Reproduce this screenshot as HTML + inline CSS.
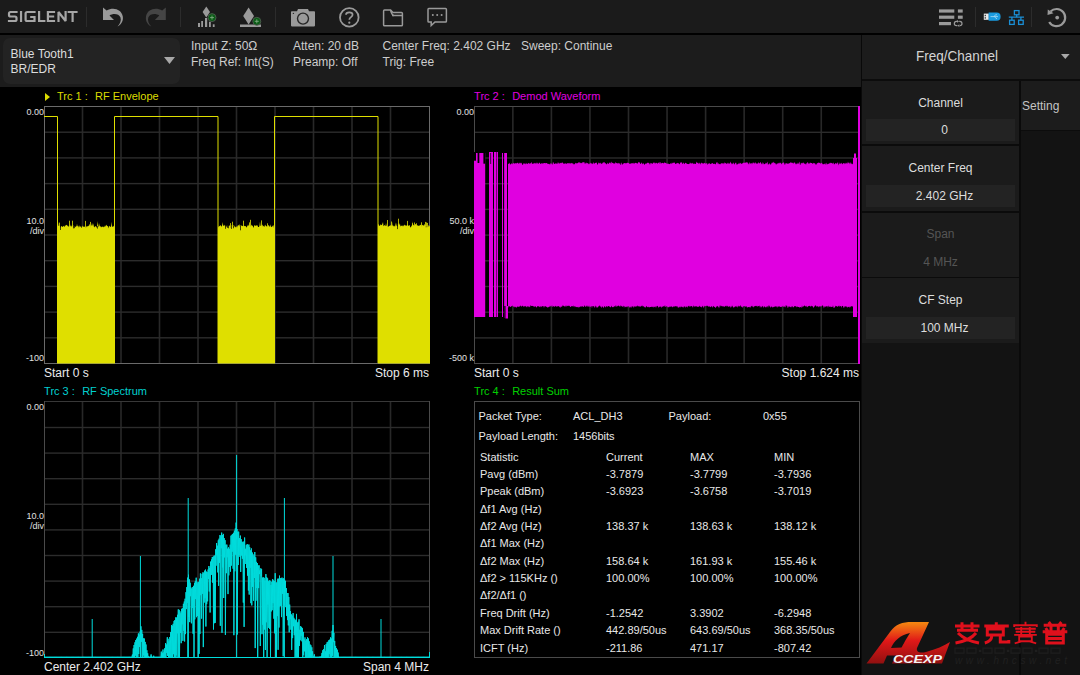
<!DOCTYPE html><html><head><meta charset="utf-8"><style>
*{margin:0;padding:0;box-sizing:border-box}
html,body{width:1080px;height:675px;overflow:hidden;background:#000;font-family:"Liberation Sans",sans-serif}
.a{position:absolute;white-space:nowrap}
.t12{font-size:12px;color:#d6d6d6}
.t11{font-size:11px}
.ax{font-size:9px;color:#e0e0e0;text-align:right;width:40px}
.w{color:#ececec;font-size:12px}
.tb{font-size:11px;color:#e8e8e8}
</style></head><body>
<div class="a" style="left:0;top:0;width:1080px;height:33px;background:#1b1b1b"></div>
<div class="a" style="left:0;top:33px;width:1080px;height:2px;background:#000"></div>
<div class="a" style="left:0;top:35px;width:861px;height:52px;background:#1c1c1c"></div>
<div class="a" style="left:3px;top:38px;width:177px;height:45.7px;background:#232323;border-radius:7px"></div>
<div class="a" style="left:861px;top:35px;width:219px;height:640px;background:#131313"></div>
<div class="a" style="left:862px;top:35px;width:218px;height:44px;background:#1c1c1c"></div>
<div class="a" style="left:861px;top:35px;width:1px;height:640px;background:#090909"></div>
<div class="a" style="left:862px;top:79px;width:218px;height:2px;background:#0c0c0c"></div>
<div class="a" style="left:1019px;top:81px;width:2px;height:594px;background:#0a0a0a"></div>
<div class="a" style="left:1021px;top:81px;width:59px;height:49px;background:#1c1c1c"></div>
<div class="a" style="left:1021px;top:130px;width:59px;height:1px;background:#0c0c0c"></div>
<div class="a" style="left:862px;top:81px;width:157px;height:262px;background:#0b0b0b"></div>
<div class="a" style="left:862px;top:81px;width:157px;height:63px;background:#1b1b1b"></div>
<div class="a" style="left:866px;top:119px;width:149px;height:22px;background:#232323"></div>
<div class="a t12" style="left:862px;width:157px;text-align:center;top:95.7px;line-height:14px;color:#dddddd">Channel</div>
<div class="a t12" style="left:866px;width:157px;text-align:center;top:123px;line-height:14px;color:#dddddd">0</div>
<div class="a" style="left:862px;top:146px;width:157px;height:65px;background:#1b1b1b"></div>
<div class="a" style="left:866px;top:185px;width:149px;height:22px;background:#232323"></div>
<div class="a t12" style="left:862px;width:157px;text-align:center;top:160.7px;line-height:14px;color:#dddddd">Center Freq</div>
<div class="a t12" style="left:866px;width:157px;text-align:center;top:188.6px;line-height:14px;color:#dddddd">2.402 GHz</div>
<div class="a" style="left:862px;top:213px;width:157px;height:64px;background:#1b1b1b"></div>
<div class="a t12" style="left:862px;width:157px;text-align:center;top:226.8px;line-height:14px;color:#555555">Span</div>
<div class="a t12" style="left:862px;width:157px;text-align:center;top:255px;line-height:14px;color:#555555">4 MHz</div>
<div class="a" style="left:862px;top:278px;width:157px;height:65px;background:#1b1b1b"></div>
<div class="a" style="left:866px;top:317px;width:149px;height:22px;background:#232323"></div>
<div class="a t12" style="left:862px;width:157px;text-align:center;top:292.7px;line-height:14px;color:#dddddd">CF Step</div>
<div class="a t12" style="left:866px;width:157px;text-align:center;top:321px;line-height:14px;color:#dddddd">100 MHz</div>
<div class="a" style="left:862px;top:48.3px;width:190px;text-align:center;font-size:14.6px;line-height:16px;color:#d4d4d4;transform:scaleX(0.925)">Freq/Channel</div>
<div class="a t12" style="left:1022px;top:99px;line-height:14px;color:#c4c4c4">Setting</div>
<div class="a t12" style="left:10.5px;top:47px;line-height:14.5px;color:#dcdcdc">Blue Tooth1<br>BR/EDR</div>
<div class="a t12" style="left:191px;top:37.8px;line-height:16px;color:#cdcdcd">Input Z: 50Ω<br>Freq Ref: Int(S)</div>
<div class="a t12" style="left:293px;top:37.8px;line-height:16px;color:#cdcdcd">Atten: 20 dB<br>Preamp: Off</div>
<div class="a t12" style="left:382.5px;top:37.8px;line-height:16px;color:#cdcdcd">Center Freq: 2.402 GHz<br>Trig: Free</div>
<div class="a t12" style="left:521px;top:37.8px;line-height:16px;color:#cdcdcd">Sweep: Continue<br></div>
<svg class="a" style="left:0;top:0" width="1080" height="675">
<path d="M164,57 L175,57 L169.5,64 Z" fill="#a8a8a8"/>
<path d="M1061,54 L1069.6,54 L1065.3,59 Z" fill="#a8a8a8"/>
<path d="M17.6,12 H10.6 Q9,12 9,13.6 V15 Q9,16.5 10.6,16.5 H14.9 Q16.5,16.5 16.5,18.1 V19.4 Q16.5,21 14.9,21 H7.9 M21.05,10.9 V22 M35.6,12 H27.2 Q25.6,12 25.6,13.6 V19.4 Q25.6,21 27.2,21 H34.5 V17 H30.2 M39.1,10.9 V21 H45.4 M55.1,12 H47.9 V21 H55.1 M47.9,16.5 H54.2 M58.5,22 V12 L65.6,21 V10.9 M67.6,12 H77.6 M72.6,12 V22" fill="none" stroke="#a6a6a6" stroke-width="2.2" stroke-miterlimit="2"/>

<rect x="86" y="7" width="1" height="20" fill="#2c2c2c"/>
<rect x="180" y="7" width="1" height="20" fill="#2c2c2c"/>
<rect x="275" y="7" width="1" height="20" fill="#2c2c2c"/>
<rect x="975" y="7" width="1" height="20" fill="#2c2c2c"/>
<rect x="1031" y="7" width="1" height="20" fill="#2c2c2c"/>
<path d="M103,7.5 L103,20 L114,20 L109.5,15.5 C113,13 119,13.5 120.5,17.5 C121.5,20.5 120,24 117.5,26.5 C121.5,24.5 123.5,20.5 122.8,16.5 C121.5,9 113,6.6 106.6,10.6 Z" fill="#9a9a9a"/>
<g transform="translate(268.8,0) scale(-1,1)"><path d="M103,7.5 L103,20 L114,20 L109.5,15.5 C113,13 119,13.5 120.5,17.5 C121.5,20.5 120,24 117.5,26.5 C121.5,24.5 123.5,20.5 122.8,16.5 C121.5,9 113,6.6 106.6,10.6 Z" fill="#454545"/></g>
<path d="M206.3,6.5 L210,12 L206.3,17.5 L202.6,12 Z" fill="#9a9a9a"/>
<rect x="198" y="23" width="2" height="4" fill="#9a9a9a"/>
<rect x="201.2" y="21" width="1.8" height="6" fill="#9a9a9a"/>
<rect x="205" y="18" width="2.2" height="9" fill="#9a9a9a"/>
<rect x="209" y="21.8" width="1.8" height="5.2" fill="#9a9a9a"/>
<rect x="212.8" y="24.3" width="1.8" height="2.7" fill="#9a9a9a"/>
<circle cx="212" cy="17.6" r="4" fill="#0a5c16" stroke="#4f5a4f" stroke-width="0.9"/>
<path d="M210,17.6 L214,17.6 M212,15.6 L212,19.6" stroke="#8ab08a" stroke-width="0.8"/>
<path d="M248.6,7.4 L254,16 L248.6,24.5 L243.2,16 Z" fill="#9a9a9a"/>
<rect x="240" y="24.5" width="21" height="2.5" fill="#9a9a9a"/>
<circle cx="256.8" cy="21.3" r="4" fill="#0a5c16" stroke="#4f5a4f" stroke-width="0.9"/>
<path d="M254.8,21.3 L258.8,21.3 M256.8,19.3 L256.8,23.3" stroke="#8ab08a" stroke-width="0.8"/>
<path d="M297,11.2 L298,9.1 L308,9.1 L309,11.2 L314.2,11.2 Q315,11.2 315,12 L315,25.6 Q315,26.4 314.2,26.4 L291.8,26.4 Q291,26.4 291,25.6 L291,12 Q291,11.2 291.8,11.2 Z" fill="#9a9a9a"/>
<circle cx="303" cy="18.6" r="5.5" fill="none" stroke="#262626" stroke-width="1.4"/>
<circle cx="293.4" cy="13.4" r="0.7" fill="#2a2a2a"/>
<circle cx="349.3" cy="17.4" r="9.3" fill="none" stroke="#9a9a9a" stroke-width="1.8"/>
<path d="M346,14.8 C346,11.5 352.6,11.5 352.6,14.8 C352.6,17.2 349.3,17.2 349.3,19.8" fill="none" stroke="#9a9a9a" stroke-width="1.7"/>
<circle cx="349.3" cy="22.7" r="1.1" fill="#9a9a9a"/>
<path d="M384.5,10 L390.5,10 L393,12.5 L401.5,12.5 Q402.4,12.5 402.4,13.4 L402.4,25 Q402.4,25.8 401.5,25.8 L384.5,25.8 Q383.6,25.8 383.6,25 L383.6,10.9 Q383.6,10 384.5,10 Z M392,15.5 L402.4,15.5" fill="none" stroke="#9a9a9a" stroke-width="1.5"/>
<path d="M390.5,10 Q392,15.5 394,15.5" fill="none" stroke="#9a9a9a" stroke-width="1.5"/>
<path d="M428.8,8.6 L445.6,8.6 Q446.4,8.6 446.4,9.4 L446.4,21.2 Q446.4,22 445.6,22 L435,22 L431.2,25.6 L431.2,22 L428.8,22 Q428,22 428,21.2 L428,9.4 Q428,8.6 428.8,8.6 Z" fill="none" stroke="#9a9a9a" stroke-width="1.5"/>
<circle cx="432.8" cy="14.9" r="1" fill="#9a9a9a"/>
<circle cx="437.2" cy="14.9" r="1" fill="#9a9a9a"/>
<circle cx="441.6" cy="14.9" r="1" fill="#9a9a9a"/>
<rect x="939" y="9.4" width="15.3" height="3.2" fill="#9a9a9a"/>
<rect x="939" y="15.6" width="15.3" height="3.2" fill="#9a9a9a"/>
<rect x="939" y="22" width="12" height="3.2" fill="#9a9a9a"/>
<rect x="957.9" y="9.4" width="4.8" height="3.2" fill="#9a9a9a"/>
<rect x="957.9" y="15.6" width="4.8" height="3.2" fill="#9a9a9a"/>
<path d="M957.6,21.4 L956.4,21.4 Q954.3,21.6 954.3,23.6 Q954.3,25.7 956.6,25.7 L957.4,25.7 M959.2,21.4 L959.8,21.4 Q962,21.6 962,23.6 Q962,25.7 959.8,25.7" fill="none" stroke="#9a9a9a" stroke-width="1.2"/>
<path d="M957,20 L959,21.4 L957,22.8 Z M959.4,24.3 L957.4,25.7 L959.4,27.1 Z" fill="#9a9a9a"/>
<rect x="983.8" y="13.6" width="5" height="6.2" fill="#e8e8e8"/>
<rect x="984.6" y="14.8" width="1.4" height="1.4" fill="#444"/><rect x="984.6" y="17.2" width="1.4" height="1.4" fill="#444"/>
<path d="M988.6,12.6 L996.6,12.6 Q1000.6,12.6 1000.6,16.65 Q1000.6,20.7 996.6,20.7 L988.6,20.7 Z" fill="#1a9be0"/>
<path d="M990.5,16.6 L998,16.6 M994,16.6 L995.5,14.8 L997,14.8 M994.6,16.6 L996,18.4 L997,18.4" stroke="#bfe4f8" stroke-width="0.7" fill="none"/>
<rect x="1014.4" y="10.6" width="4.6" height="4.2" fill="none" stroke="#1a8fd6" stroke-width="1.3"/>
<rect x="1009.6" y="20.2" width="4.6" height="4.2" fill="none" stroke="#1a8fd6" stroke-width="1.3"/>
<rect x="1018.6" y="20.2" width="4.6" height="4.2" fill="none" stroke="#1a8fd6" stroke-width="1.3"/>
<path d="M1016.7,14.8 L1016.7,17 M1008.8,17.2 L1024,17.2 M1011.9,17 L1011.9,20.2 M1020.9,17 L1020.9,20.2" stroke="#1a8fd6" stroke-width="1.3" fill="none"/>
<path d="M1050.5,11.5 A8.6,8.6 0 1 1 1049.2,22" fill="none" stroke="#9a9a9a" stroke-width="2.2"/>
<path d="M1047.5,15 L1047.8,9.5 L1053.5,13.2 Z" fill="#9a9a9a"/>
<circle cx="1057.2" cy="17.6" r="1.9" fill="#9a9a9a"/>
<rect x="81.70" y="106" width="1.6" height="257" fill="#282828"/>
<rect x="120.20" y="106" width="1.6" height="257" fill="#282828"/>
<rect x="158.70" y="106" width="1.6" height="257" fill="#282828"/>
<rect x="197.20" y="106" width="1.6" height="257" fill="#282828"/>
<rect x="235.70" y="106" width="1.6" height="257" fill="#282828"/>
<rect x="274.20" y="106" width="1.6" height="257" fill="#282828"/>
<rect x="312.70" y="106" width="1.6" height="257" fill="#282828"/>
<rect x="351.20" y="106" width="1.6" height="257" fill="#282828"/>
<rect x="389.70" y="106" width="1.6" height="257" fill="#282828"/>
<rect x="44" y="131.50" width="385" height="1.4" fill="#2c2c2c"/>
<rect x="44" y="157.20" width="385" height="1.4" fill="#2c2c2c"/>
<rect x="44" y="182.90" width="385" height="1.4" fill="#2c2c2c"/>
<rect x="44" y="208.60" width="385" height="1.4" fill="#2c2c2c"/>
<rect x="44" y="234.30" width="385" height="1.4" fill="#2c2c2c"/>
<rect x="44" y="260.00" width="385" height="1.4" fill="#2c2c2c"/>
<rect x="44" y="285.70" width="385" height="1.4" fill="#2c2c2c"/>
<rect x="44" y="311.40" width="385" height="1.4" fill="#2c2c2c"/>
<rect x="44" y="337.10" width="385" height="1.4" fill="#2c2c2c"/>
<g shape-rendering="crispEdges">
<rect x="44" y="106" width="386" height="1" fill="#6a6a6a"/>
<rect x="44" y="363" width="386" height="1" fill="#6a6a6a"/>
<rect x="44" y="106" width="1" height="258" fill="#6a6a6a"/>
<rect x="429" y="106" width="1" height="258" fill="#6a6a6a"/>
</g>
<rect x="512.05" y="106" width="1.6" height="257" fill="#282828"/>
<rect x="550.60" y="106" width="1.6" height="257" fill="#282828"/>
<rect x="589.15" y="106" width="1.6" height="257" fill="#282828"/>
<rect x="627.70" y="106" width="1.6" height="257" fill="#282828"/>
<rect x="666.25" y="106" width="1.6" height="257" fill="#282828"/>
<rect x="704.80" y="106" width="1.6" height="257" fill="#282828"/>
<rect x="743.35" y="106" width="1.6" height="257" fill="#282828"/>
<rect x="781.90" y="106" width="1.6" height="257" fill="#282828"/>
<rect x="820.45" y="106" width="1.6" height="257" fill="#282828"/>
<rect x="474" y="131.60" width="385" height="1.4" fill="#2c2c2c"/>
<rect x="474" y="157.30" width="385" height="1.4" fill="#2c2c2c"/>
<rect x="474" y="183.00" width="385" height="1.4" fill="#2c2c2c"/>
<rect x="474" y="208.70" width="385" height="1.4" fill="#2c2c2c"/>
<rect x="474" y="234.40" width="385" height="1.4" fill="#2c2c2c"/>
<rect x="474" y="260.10" width="385" height="1.4" fill="#2c2c2c"/>
<rect x="474" y="285.80" width="385" height="1.4" fill="#2c2c2c"/>
<rect x="474" y="311.50" width="385" height="1.4" fill="#2c2c2c"/>
<rect x="474" y="337.20" width="385" height="1.4" fill="#2c2c2c"/>
<g shape-rendering="crispEdges">
<rect x="474" y="106" width="386" height="1" fill="#4a4a4a"/>
<rect x="474" y="363" width="386" height="1" fill="#4a4a4a"/>
<rect x="474" y="106" width="1" height="258" fill="#4a4a4a"/>
<rect x="859" y="106" width="1" height="258" fill="#4a4a4a"/>
</g>
<rect x="81.70" y="401" width="1.6" height="256" fill="#282828"/>
<rect x="120.20" y="401" width="1.6" height="256" fill="#282828"/>
<rect x="158.70" y="401" width="1.6" height="256" fill="#282828"/>
<rect x="197.20" y="401" width="1.6" height="256" fill="#282828"/>
<rect x="235.70" y="401" width="1.6" height="256" fill="#282828"/>
<rect x="274.20" y="401" width="1.6" height="256" fill="#282828"/>
<rect x="312.70" y="401" width="1.6" height="256" fill="#282828"/>
<rect x="351.20" y="401" width="1.6" height="256" fill="#282828"/>
<rect x="389.70" y="401" width="1.6" height="256" fill="#282828"/>
<rect x="44" y="426.80" width="385" height="1.4" fill="#2c2c2c"/>
<rect x="44" y="452.40" width="385" height="1.4" fill="#2c2c2c"/>
<rect x="44" y="478.00" width="385" height="1.4" fill="#2c2c2c"/>
<rect x="44" y="503.60" width="385" height="1.4" fill="#2c2c2c"/>
<rect x="44" y="529.20" width="385" height="1.4" fill="#2c2c2c"/>
<rect x="44" y="554.80" width="385" height="1.4" fill="#2c2c2c"/>
<rect x="44" y="580.40" width="385" height="1.4" fill="#2c2c2c"/>
<rect x="44" y="606.00" width="385" height="1.4" fill="#2c2c2c"/>
<rect x="44" y="631.60" width="385" height="1.4" fill="#2c2c2c"/>
<g shape-rendering="crispEdges">
<rect x="44" y="401" width="386" height="1" fill="#383838"/>
<rect x="44" y="657" width="386" height="1" fill="#4a4a4a"/>
<rect x="44" y="401" width="1" height="257" fill="#4a4a4a"/>
<rect x="429" y="401" width="1" height="257" fill="#4a4a4a"/>
</g>
<path d="M44,116.5 L57.5,116.5 L57.5,363 M114.5,363 L114.5,116.5 L218,116.5 L218,363 M274.5,363 L274.5,116.5 L378,116.5 L378,363" stroke="#dfdf00" stroke-width="1" fill="none"/>
<polygon points="57,363.5 57,226.5 57.5,226.8 58,221.7 58.5,225.7 59,226.1 59.5,225.6 60,226.6 60.5,227.7 61,226.1 61.5,225.9 62,226.9 62.5,226.8 63,226.6 63.5,225.7 64,226.5 64.5,227.1 65,225.3 65.5,226.1 66,224.8 66.5,225.3 67,224.8 67.5,226.3 68,225.4 68.5,226.7 69,226.6 69.5,226.3 70,224.2 70.5,226 71,226.5 71.5,226.6 72,225.1 72.5,226.1 73,225.6 73.5,225.8 74,227.5 74.5,225.8 75,226.5 75.5,227.3 76,226 76.5,226.4 77,223.7 77.5,226.6 78,225.4 78.5,226.6 79,227.7 79.5,225.1 80,227.3 80.5,226.6 81,225.9 81.5,228.3 82,227.2 82.5,225.4 83,226.6 83.5,227 84,226.3 84.5,227.1 85,226.4 85.5,227.1 86,227.8 86.5,225.9 87,226.7 87.5,226.1 88,226.6 88.5,225.4 89,226 89.5,224.2 90,224.3 90.5,227.5 91,225.3 91.5,225.8 92,222.7 92.5,224.7 93,226.1 93.5,223.2 94,227.6 94.5,227.1 95,226.2 95.5,226.2 96,226.3 96.5,227.9 97,226.1 97.5,221 98,226.8 98.5,226.4 99,223 99.5,225.5 100,226.5 100.5,226.1 101,227.5 101.5,227.1 102,226.5 102.5,227.1 103,226.2 103.5,227.4 104,226.5 104.5,227 105,225.3 105.5,226.8 106,225 106.5,224.7 107,226.2 107.5,225.7 108,226.6 108.5,228.5 109,225.8 109.5,225.9 110,226.7 110.5,226.9 111,226.3 111.5,221.7 112,227.1 112.5,227 113,225.6 113.5,226.4 114,226.5 114.5,225.6 115,226.7 115,363.5" fill="#dfdf00"/>
<rect x="59" y="222.6" width="0.8" height="4.9" fill="#dfdf00"/>
<rect x="60" y="226" width="0.7" height="4" fill="#000"/>
<rect x="69" y="220.7" width="0.8" height="6.8" fill="#dfdf00"/>
<rect x="72" y="220.7" width="0.8" height="6.8" fill="#dfdf00"/>
<rect x="73" y="226" width="0.7" height="2.4" fill="#000"/>
<rect x="74" y="226" width="0.7" height="2.2" fill="#000"/>
<rect x="85" y="220.9" width="0.8" height="6.6" fill="#dfdf00"/>
<rect x="90" y="221.9" width="0.8" height="5.6" fill="#dfdf00"/>
<rect x="97" y="226" width="0.7" height="2.6" fill="#000"/>
<polygon points="218,363.5 218,225.4 218.5,227.4 219,226.5 219.5,226.1 220,225.7 220.5,225 221,225.9 221.5,226.8 222,225.6 222.5,222 223,225.8 223.5,226.1 224,224.6 224.5,225.8 225,225.2 225.5,226.8 226,225.3 226.5,226.5 227,227.4 227.5,225.7 228,225.5 228.5,226.2 229,226 229.5,225.1 230,226.4 230.5,227.8 231,225.8 231.5,225.8 232,225.1 232.5,226.3 233,224.9 233.5,225 234,227.2 234.5,225.2 235,227 235.5,227.4 236,226.2 236.5,226.5 237,227.8 237.5,225.8 238,225.5 238.5,224.8 239,226 239.5,223.8 240,226.9 240.5,225.2 241,225.2 241.5,225.5 242,226.3 242.5,225.8 243,226.2 243.5,226.3 244,225.7 244.5,226 245,226.2 245.5,225.9 246,226.5 246.5,227.7 247,226.5 247.5,226.1 248,224.5 248.5,226.3 249,224.2 249.5,224.7 250,226.8 250.5,226.6 251,225.9 251.5,224.5 252,225.7 252.5,225.4 253,226.6 253.5,228 254,226.2 254.5,225.3 255,224.9 255.5,225.9 256,225.8 256.5,225 257,226.1 257.5,225 258,227 258.5,227 259,227 259.5,225.6 260,221.5 260.5,225.9 261,225.7 261.5,225.7 262,224.8 262.5,224.7 263,226.7 263.5,225.8 264,226.2 264.5,226.9 265,224.4 265.5,225.3 266,226.2 266.5,226.4 267,225.7 267.5,226.9 268,226.2 268.5,224.9 269,225.2 269.5,226.7 270,226.4 270.5,224.3 271,227.2 271.5,226.5 272,227.2 272.5,225.7 273,225.7 273.5,225 274,228.3 274.5,225.8 275,227.4 275,363.5" fill="#dfdf00"/>
<rect x="225" y="225.5" width="0.7" height="3.3" fill="#000"/>
<rect x="227" y="225.5" width="0.7" height="2.4" fill="#000"/>
<rect x="228" y="225.5" width="0.7" height="2.8" fill="#000"/>
<rect x="230" y="223.1" width="0.8" height="3.9" fill="#dfdf00"/>
<rect x="231" y="225.5" width="0.7" height="3.4" fill="#000"/>
<rect x="232" y="221.7" width="0.8" height="5.3" fill="#dfdf00"/>
<rect x="233" y="225.5" width="0.7" height="2.8" fill="#000"/>
<rect x="240" y="225.5" width="0.7" height="4.8" fill="#000"/>
<rect x="243" y="220.7" width="0.8" height="6.3" fill="#dfdf00"/>
<rect x="249" y="222.4" width="0.8" height="4.6" fill="#dfdf00"/>
<rect x="250" y="219.8" width="0.8" height="7.2" fill="#dfdf00"/>
<rect x="261" y="220.4" width="0.8" height="6.6" fill="#dfdf00"/>
<rect x="267" y="223.3" width="0.8" height="3.7" fill="#dfdf00"/>
<polygon points="378,363.5 378,224.6 378.5,224 379,226 379.5,225.5 380,225.8 380.5,224 381,225.2 381.5,225 382,224.7 382.5,223.5 383,221.9 383.5,226.3 384,225.8 384.5,225 385,225.5 385.5,226.2 386,223 386.5,225.4 387,226 387.5,226.1 388,227 388.5,226.5 389,225.8 389.5,225.8 390,226.2 390.5,225 391,225.5 391.5,226.3 392,221.8 392.5,225.4 393,225.5 393.5,225.7 394,226.7 394.5,225.5 395,226.8 395.5,224.6 396,222.5 396.5,225.3 397,226.2 397.5,226.4 398,224.1 398.5,224.7 399,222.5 399.5,224.9 400,224.1 400.5,226.4 401,225.9 401.5,225.9 402,225.1 402.5,226.4 403,225.3 403.5,226.5 404,224.7 404.5,224.7 405,225.7 405.5,224.9 406,226.1 406.5,225.7 407,224.7 407.5,225.6 408,225.2 408.5,226.3 409,224.9 409.5,225.1 410,226.6 410.5,227.5 411,227.3 411.5,225.6 412,225.7 412.5,221.2 413,225.4 413.5,224.6 414,225.6 414.5,225.9 415,224.8 415.5,224 416,224.2 416.5,226.1 417,224.8 417.5,225.4 418,225.7 418.5,226.1 419,225.2 419.5,225.9 420,224.7 420.5,225.2 421,224.6 421.5,226.5 422,225.5 422.5,224.8 423,225.2 423.5,225.3 424,226.1 424.5,224.1 425,224.6 425.5,225.2 426,227.8 426.5,226.4 427,225.4 427.5,226.1 428,227.4 428.5,225.3 429,225.2 429.5,226.6 430,225.9 430,363.5" fill="#dfdf00"/>
<rect x="387" y="220" width="0.8" height="6.5" fill="#dfdf00"/>
<rect x="391" y="221.5" width="0.8" height="5" fill="#dfdf00"/>
<rect x="397" y="225" width="0.7" height="4.1" fill="#000"/>
<rect x="398" y="218.7" width="0.8" height="7.8" fill="#dfdf00"/>
<rect x="407" y="220.9" width="0.8" height="5.6" fill="#dfdf00"/>
<rect x="412" y="223.3" width="0.8" height="3.2" fill="#dfdf00"/>
<rect x="414" y="222.5" width="0.8" height="4" fill="#dfdf00"/>
<rect x="416" y="223.3" width="0.8" height="3.2" fill="#dfdf00"/>
<rect x="421" y="222.3" width="0.8" height="4.2" fill="#dfdf00"/>
<rect x="425" y="221.9" width="0.8" height="4.6" fill="#dfdf00"/>
<rect x="426" y="222.4" width="0.8" height="4.1" fill="#dfdf00"/>
<rect x="427" y="222.9" width="0.8" height="3.6" fill="#dfdf00"/>
<rect x="474" y="153" width="11.2" height="164" fill="#e000e0"/>
<rect x="489" y="152" width="4" height="165" fill="#e000e0"/>
<rect x="494" y="152" width="2.3" height="165" fill="#e000e0"/>
<rect x="496.7" y="152" width="1.3" height="165" fill="#e000e0"/>
<rect x="502" y="153" width="1" height="164" fill="#e000e0"/>
<rect x="504.4" y="153" width="2.6" height="165" fill="#e000e0"/>
<rect x="474" y="152" width="2" height="8.7" fill="#000"/>
<rect x="477.6" y="152" width="1.7" height="11" fill="#000"/>
<rect x="483.4" y="152" width="1.9" height="11.7" fill="#000"/>
<rect x="490.4" y="153" width="0.7" height="11" fill="#000"/>
<rect x="504.4" y="306" width="2.6" height="12" fill="#000"/>
<rect x="504.4" y="153" width="2.6" height="153" fill="#e000e0"/>
<rect x="505.5" y="306" width="2.5" height="12.5" fill="#e000e0"/>
<polygon points="508,164.2 508.5,163.5 509,163.9 509.5,162.5 510,163.9 510.5,164.8 511,163.8 511.5,163.5 512,163.4 512.5,164.6 513,162.7 513.5,163.2 514,163.6 514.5,163.8 515,163 515.5,163.5 516,163.1 516.5,163.4 517,163.2 517.5,162.5 518,163.3 518.5,163.9 519,162.6 519.5,163.1 520,163.8 520.5,162.6 521,163.4 521.5,162.6 522,164.1 522.5,164.9 523,164.7 523.5,163.1 524,163.8 524.5,163.4 525,163.4 525.5,164.4 526,162.4 526.5,164 527,163.3 527.5,164.3 528,163.4 528.5,162.8 529,163.5 529.5,163.8 530,163.3 530.5,163.6 531,162.9 531.5,161.8 532,163.9 532.5,163.8 533,163.4 533.5,163.3 534,164 534.5,163 535,162.8 535.5,163.2 536,164.1 536.5,162.3 537,164.1 537.5,162.9 538,162.5 538.5,164.2 539,163.2 539.5,162.4 540,163 540.5,164 541,164.1 541.5,163 542,163.6 542.5,163.8 543,162.8 543.5,163.5 544,163.3 544.5,162.9 545,163 545.5,163.3 546,163.3 546.5,162.9 547,163 547.5,164.1 548,163.4 548.5,163.9 549,164.1 549.5,163.7 550,164.9 550.5,162.7 551,163.9 551.5,163.1 552,164.6 552.5,164.5 553,161.9 553.5,162.6 554,163.8 554.5,163.9 555,163.8 555.5,163.3 556,163.6 556.5,163.8 557,163.2 557.5,164 558,161.7 558.5,163.7 559,162.6 559.5,164 560,163.1 560.5,162.7 561,163.6 561.5,162.7 562,162.7 562.5,162.2 563,163.3 563.5,163.6 564,164 564.5,163.2 565,164 565.5,163.3 566,163.2 566.5,163.7 567,164 567.5,163.1 568,163.1 568.5,163.2 569,163.4 569.5,162.7 570,164 570.5,163 571,163.6 571.5,162.7 572,163.6 572.5,163.6 573,163 573.5,164.7 574,163.6 574.5,164.5 575,164 575.5,162.8 576,163 576.5,163.6 577,163.3 577.5,163.3 578,163.1 578.5,162 579,163.1 579.5,161.7 580,163.6 580.5,162.8 581,162.8 581.5,163.1 582,163.5 582.5,162.3 583,162.1 583.5,162.6 584,161.9 584.5,162.6 585,164.4 585.5,162.6 586,163.8 586.5,162.3 587,163.5 587.5,163.1 588,163.3 588.5,163.7 589,164.5 589.5,163.4 590,163.4 590.5,162.6 591,163.7 591.5,163.1 592,163.9 592.5,163.3 593,164.5 593.5,161.9 594,163.1 594.5,163.9 595,163.1 595.5,162.7 596,163.1 596.5,162.3 597,163.4 597.5,165 598,164.1 598.5,162.5 599,162.7 599.5,163 600,164 600.5,162.7 601,162.8 601.5,163.9 602,163.9 602.5,163 603,162.5 603.5,162.2 604,162.8 604.5,161.7 605,163.8 605.5,162.9 606,163.6 606.5,164.6 607,164.1 607.5,162.5 608,163.9 608.5,164.1 609,162.8 609.5,162.6 610,163.2 610.5,162.2 611,164.3 611.5,161.6 612,162.5 612.5,163.1 613,163.1 613.5,163.4 614,163.5 614.5,163.2 615,164.1 615.5,161.8 616,163.3 616.5,162.8 617,163.4 617.5,163.5 618,162.7 618.5,162.9 619,163.9 619.5,163.5 620,162.8 620.5,164.7 621,164.9 621.5,162.3 622,163.5 622.5,165.1 623,163.8 623.5,163.5 624,163.2 624.5,162.9 625,163.2 625.5,162.9 626,163.8 626.5,163 627,163 627.5,162.5 628,163.3 628.5,162.7 629,163.2 629.5,164 630,163.6 630.5,163.7 631,163.5 631.5,163.3 632,163.2 632.5,163.1 633,163.8 633.5,162.5 634,164.2 634.5,163.3 635,162.8 635.5,163 636,162.8 636.5,163.4 637,162.8 637.5,164.1 638,162.8 638.5,161.7 639,162.8 639.5,161.9 640,163.3 640.5,164 641,163.8 641.5,162.4 642,162.8 642.5,164.5 643,163.5 643.5,163.3 644,164 644.5,165 645,164.2 645.5,163.4 646,163.5 646.5,163.7 647,162.9 647.5,162.6 648,163.3 648.5,162.6 649,163.3 649.5,163.4 650,164.9 650.5,162.7 651,163.2 651.5,163.2 652,163.6 652.5,164 653,163 653.5,162.7 654,162.2 654.5,162.7 655,163.7 655.5,163.3 656,162.6 656.5,163 657,163.3 657.5,163.7 658,162.9 658.5,163.1 659,162 659.5,162.5 660,164.4 660.5,161.8 661,163.1 661.5,163.5 662,163 662.5,162.7 663,163.3 663.5,163.3 664,163.2 664.5,162 665,163.2 665.5,162.7 666,162.9 666.5,163.5 667,163.7 667.5,163.9 668,163 668.5,163.9 669,164.1 669.5,164.1 670,164.3 670.5,163.2 671,163.2 671.5,163.9 672,162.3 672.5,163.4 673,162.9 673.5,163 674,162.1 674.5,162.7 675,163.3 675.5,163.9 676,164 676.5,163.2 677,163.2 677.5,162.7 678,163.6 678.5,163.1 679,163.7 679.5,164.5 680,163.3 680.5,162.3 681,162.7 681.5,162.3 682,162.5 682.5,164.2 683,163.5 683.5,162.2 684,163.8 684.5,164.2 685,163 685.5,162.8 686,163.1 686.5,163.5 687,163.7 687.5,164.1 688,164.1 688.5,164.1 689,164.3 689.5,163.8 690,162.2 690.5,163.2 691,163.5 691.5,163 692,163.9 692.5,163 693,162.7 693.5,164.3 694,163.8 694.5,163.5 695,163.9 695.5,164 696,163.5 696.5,161.6 697,162.8 697.5,163 698,162.6 698.5,163.4 699,164.1 699.5,163 700,162.5 700.5,164.7 701,163 701.5,162.4 702,163.5 702.5,163.6 703,162.8 703.5,163.9 704,163 704.5,162.7 705,163.4 705.5,163.8 706,162.9 706.5,163.5 707,163.2 707.5,165.3 708,162.8 708.5,164.3 709,163.3 709.5,163.2 710,163.8 710.5,163.9 711,164.2 711.5,163.5 712,162.9 712.5,162.9 713,163.7 713.5,163.7 714,164.3 714.5,163.6 715,164 715.5,164.4 716,163.4 716.5,162.3 717,162.5 717.5,162.3 718,164.4 718.5,162.7 719,164.2 719.5,163.7 720,164.5 720.5,164 721,163.2 721.5,163.2 722,163.4 722.5,163.4 723,162.9 723.5,163.3 724,164.4 724.5,162.1 725,163.5 725.5,162.7 726,163.4 726.5,163.9 727,163.3 727.5,163.8 728,162.2 728.5,164.1 729,162.9 729.5,163.7 730,163.4 730.5,161.5 731,162.8 731.5,163.5 732,164.4 732.5,163.5 733,163.5 733.5,162.3 734,164.3 734.5,164.6 735,163.3 735.5,163.1 736,162.2 736.5,163.9 737,165.2 737.5,163.8 738,164.2 738.5,163.7 739,162.6 739.5,164.2 740,162.4 740.5,163.2 741,163.5 741.5,163.9 742,163.6 742.5,163.6 743,162.8 743.5,162.4 744,163.3 744.5,162.8 745,162.4 745.5,162.4 746,163 746.5,162 747,162.4 747.5,162.2 748,163.4 748.5,163.6 749,164.7 749.5,162.3 750,162.8 750.5,163.9 751,163.1 751.5,163.1 752,164.5 752.5,163.1 753,162.5 753.5,162.4 754,163.5 754.5,163.5 755,162.3 755.5,162.6 756,163.7 756.5,163.7 757,162.8 757.5,163.7 758,163.7 758.5,162.1 759,163.1 759.5,163.6 760,162.9 760.5,161.8 761,163.1 761.5,163.8 762,164.4 762.5,161.8 763,165.1 763.5,162.5 764,164 764.5,164.2 765,164 765.5,163.4 766,162.5 766.5,163.7 767,162.8 767.5,161.5 768,165.3 768.5,163.8 769,164.6 769.5,162.7 770,164.3 770.5,164.4 771,164.4 771.5,163.3 772,162.5 772.5,163.2 773,161.8 773.5,162.1 774,163.4 774.5,162.6 775,163.2 775.5,163.2 776,164.7 776.5,164.2 777,163.3 777.5,164.1 778,162.8 778.5,163.1 779,163.9 779.5,162.4 780,163.1 780.5,162.4 781,163.4 781.5,164.4 782,162.8 782.5,163.5 783,162.7 783.5,162.5 784,162.4 784.5,164.3 785,165 785.5,163.6 786,162.8 786.5,163.8 787,163.1 787.5,163.9 788,163.5 788.5,163.5 789,163.7 789.5,162.9 790,163 790.5,162.1 791,163 791.5,162.3 792,163.2 792.5,162.6 793,163.4 793.5,163.6 794,162.3 794.5,162.7 795,162.6 795.5,163.8 796,164.5 796.5,163.9 797,163.1 797.5,164.3 798,162.2 798.5,164.3 799,162.8 799.5,161.4 800,165.2 800.5,164.4 801,162.6 801.5,163.4 802,163.1 802.5,163.4 803,162.3 803.5,162.8 804,163.6 804.5,163.5 805,164.1 805.5,163.4 806,164.9 806.5,162.8 807,163.5 807.5,162 808,162.4 808.5,164.2 809,162.6 809.5,163.7 810,163.3 810.5,162.6 811,163.1 811.5,162.9 812,163 812.5,163.8 813,163.8 813.5,162.9 814,162.7 814.5,163.5 815,163.2 815.5,164 816,165.2 816.5,163.9 817,163.3 817.5,163.2 818,162.7 818.5,162.7 819,162.6 819.5,163 820,163 820.5,163.8 821,163 821.5,163.2 822,162.4 822.5,164.5 823,163.7 823.5,164.6 824,163.9 824.5,164.3 825,163.1 825.5,163.8 826,165.2 826.5,162.4 827,164.1 827.5,164.5 828,163.6 828.5,163.8 829,164.2 829.5,162.8 830,163.6 830.5,162.7 831,162.8 831.5,162.9 832,163.2 832.5,163.4 833,163.6 833.5,162.3 834,164.7 834.5,164.1 835,163.8 835.5,163 836,163.2 836.5,163.7 837,163.6 837.5,162.1 838,163.8 838.5,165.4 839,162 839.5,164 840,163.6 840.5,163.2 841,164.3 841.5,162.5 842,163.4 842.5,164.4 843,163.2 843.5,163 844,163.4 844.5,163 845,164.4 845.5,162.6 846,163.9 846.5,162.4 847,163.8 847.5,163.2 848,161.4 848.5,163.3 849,162.5 849.5,163 850,164.4 850.5,162.5 851,162.5 851.5,164.3 852,163.4 852.5,164.4 853,163.5 853.5,162.7 854,163.3 854.5,164.2 855,164 855.5,163.3 856,163.3 856.5,163.2 857,162.9 857,306.5 856.5,306.2 856,307.4 855.5,307.1 855,308 854.5,307.6 854,305.9 853.5,305.5 853,305.9 852.5,306.4 852,306.7 851.5,306.1 851,306.3 850.5,307.4 850,305.9 849.5,307.7 849,307.1 848.5,307.1 848,306.6 847.5,307.6 847,307.6 846.5,306 846,307.3 845.5,306.3 845,306.1 844.5,306.8 844,308.1 843.5,307.4 843,306 842.5,305.9 842,305.8 841.5,307.9 841,306.1 840.5,306.1 840,306.7 839.5,306.5 839,305.3 838.5,306.5 838,306 837.5,307.3 837,306.2 836.5,306 836,306.5 835.5,305.6 835,307.3 834.5,307.3 834,308.2 833.5,307.6 833,305.2 832.5,307.1 832,306.9 831.5,306.7 831,307.2 830.5,306.7 830,306.2 829.5,306.8 829,306.9 828.5,305.3 828,308 827.5,306.1 827,306.4 826.5,306.4 826,305.8 825.5,306.8 825,307.3 824.5,305.9 824,308.4 823.5,306.9 823,305.6 822.5,305.6 822,305.8 821.5,305.9 821,307.2 820.5,306 820,306.4 819.5,306.1 819,307.6 818.5,306.7 818,306.2 817.5,306.6 817,306.1 816.5,307.1 816,305.4 815.5,305.6 815,305.5 814.5,306.4 814,307 813.5,307.9 813,306.7 812.5,306 812,306.4 811.5,305.6 811,306.5 810.5,306.6 810,306.2 809.5,305.8 809,306 808.5,306.1 808,306.4 807.5,306.8 807,307.6 806.5,305.6 806,306.9 805.5,306.1 805,306.3 804.5,305.3 804,305.9 803.5,306.4 803,306.4 802.5,307.5 802,305.3 801.5,307.9 801,307 800.5,307.2 800,306.9 799.5,307.7 799,306.9 798.5,307 798,307 797.5,306.9 797,305.7 796.5,307.4 796,306.6 795.5,306.3 795,306.1 794.5,305.9 794,307.1 793.5,307.4 793,306.8 792.5,305.9 792,307.7 791.5,305.9 791,307.5 790.5,307.1 790,306.8 789.5,306.4 789,306.7 788.5,306.2 788,308.3 787.5,307.3 787,305.6 786.5,306.6 786,304.6 785.5,307.1 785,307.4 784.5,306.3 784,306.7 783.5,307.1 783,305.5 782.5,306.8 782,306.2 781.5,307.3 781,306.8 780.5,307.1 780,306.9 779.5,306.4 779,306.1 778.5,306.5 778,307.3 777.5,307.4 777,305.6 776.5,307.4 776,306 775.5,306.6 775,306.7 774.5,306.4 774,307 773.5,307.3 773,306.6 772.5,307.7 772,307 771.5,306.6 771,306.4 770.5,307.9 770,306.5 769.5,306.5 769,305.1 768.5,306.1 768,308.1 767.5,305.7 767,307 766.5,306.2 766,308 765.5,306.8 765,307.3 764.5,306.4 764,305.9 763.5,307.8 763,307.3 762.5,305.8 762,306.3 761.5,307 761,307.7 760.5,305.7 760,307.9 759.5,305.6 759,305.9 758.5,306.1 758,306.6 757.5,306.7 757,305.4 756.5,306.6 756,305.8 755.5,306.1 755,306.3 754.5,306.6 754,306.1 753.5,307.6 753,307 752.5,306.4 752,305.6 751.5,306.4 751,305.9 750.5,307.9 750,306.6 749.5,307.6 749,306.9 748.5,307 748,307.2 747.5,307.2 747,307.8 746.5,306.3 746,306.2 745.5,306.9 745,306.1 744.5,305.9 744,306.7 743.5,306.1 743,306.7 742.5,308.1 742,306.3 741.5,306.7 741,307.2 740.5,304.9 740,306.1 739.5,306.8 739,305.7 738.5,305.8 738,307.5 737.5,307.3 737,305.5 736.5,306.9 736,306.6 735.5,306.5 735,306.2 734.5,307.5 734,306.8 733.5,307.8 733,307.3 732.5,305.9 732,305.4 731.5,306.8 731,307.4 730.5,307.5 730,305.8 729.5,306.8 729,306.3 728.5,307.1 728,306.6 727.5,305.5 727,307.1 726.5,306 726,305.6 725.5,306.3 725,306.2 724.5,307.2 724,306 723.5,306.5 723,306.8 722.5,306.3 722,306 721.5,305.7 721,306.7 720.5,306.1 720,305.1 719.5,306.7 719,308.5 718.5,306.7 718,306.8 717.5,305.7 717,306.5 716.5,306.2 716,307.6 715.5,307.9 715,306.9 714.5,307.1 714,306.6 713.5,305.8 713,307.1 712.5,307.8 712,306 711.5,306.6 711,306.4 710.5,307.2 710,307 709.5,306.5 709,306.1 708.5,307.2 708,305.8 707.5,305.7 707,306.6 706.5,305.5 706,306.3 705.5,306.2 705,305.8 704.5,306.1 704,307.6 703.5,307.7 703,306.1 702.5,305.8 702,307.5 701.5,307.3 701,306.5 700.5,306.8 700,307 699.5,305.5 699,306.4 698.5,306.9 698,306.5 697.5,306.7 697,307.1 696.5,305.9 696,306.5 695.5,305.9 695,306.9 694.5,306.3 694,306.5 693.5,305.2 693,307.7 692.5,307 692,306.1 691.5,306.3 691,306.1 690.5,306.4 690,306.5 689.5,306.7 689,305.6 688.5,306.4 688,305.8 687.5,307.5 687,307.2 686.5,306.6 686,306.4 685.5,307.9 685,305.9 684.5,307.1 684,306 683.5,308.1 683,306.6 682.5,307.6 682,306.8 681.5,306.8 681,306.5 680.5,306.8 680,308.1 679.5,306.6 679,306.9 678.5,307.5 678,308 677.5,306.2 677,306.5 676.5,306.2 676,306.6 675.5,306.2 675,306 674.5,306.8 674,306.4 673.5,306.5 673,306.7 672.5,307.4 672,306.6 671.5,306.5 671,306.6 670.5,306.4 670,307.2 669.5,306.2 669,307.6 668.5,307.3 668,306.8 667.5,307.6 667,305.7 666.5,306.3 666,307 665.5,307 665,305 664.5,306.4 664,306.6 663.5,305.9 663,306.8 662.5,307 662,306.1 661.5,307.9 661,307.1 660.5,306.8 660,305.9 659.5,307.3 659,306.7 658.5,308.1 658,306.4 657.5,306.1 657,305.7 656.5,306.4 656,308 655.5,306.4 655,306.5 654.5,307.3 654,306.5 653.5,307.8 653,306.2 652.5,307.3 652,306.8 651.5,306.8 651,306.9 650.5,307 650,307.1 649.5,307.2 649,307.4 648.5,306.6 648,307.4 647.5,306.8 647,307.3 646.5,305.8 646,306.4 645.5,307.7 645,307.3 644.5,307.3 644,306.6 643.5,305.9 643,306.9 642.5,305.8 642,305.6 641.5,306.1 641,306.5 640.5,307 640,305.7 639.5,306.8 639,306.4 638.5,306.3 638,306.3 637.5,305.2 637,307 636.5,305.9 636,306.6 635.5,306.7 635,306.2 634.5,306.2 634,307.4 633.5,307.4 633,305.8 632.5,307.1 632,306 631.5,306.9 631,308.2 630.5,306.7 630,306.8 629.5,307.9 629,306.3 628.5,306.1 628,307.4 627.5,306.1 627,307.3 626.5,306.3 626,307.6 625.5,306.7 625,306.8 624.5,306 624,307.9 623.5,305.5 623,306.5 622.5,307.1 622,305.9 621.5,305.8 621,307.1 620.5,305 620,306.9 619.5,306.3 619,305.8 618.5,305.7 618,305.6 617.5,306.4 617,306.1 616.5,307.3 616,305.1 615.5,305.9 615,307.3 614.5,305.9 614,306.2 613.5,307.3 613,306.9 612.5,307.2 612,306.9 611.5,305.5 611,307.1 610.5,307.4 610,306.7 609.5,306.8 609,306.1 608.5,306.3 608,305.8 607.5,306.7 607,307.3 606.5,306.1 606,306.3 605.5,307.6 605,306.9 604.5,305.7 604,306.9 603.5,307.9 603,307.2 602.5,306.2 602,306.7 601.5,308.2 601,306.1 600.5,307.3 600,305.6 599.5,305.6 599,306.5 598.5,306 598,307.4 597.5,307.2 597,307.4 596.5,307.4 596,305.4 595.5,306.1 595,307.8 594.5,307.4 594,305.9 593.5,306.4 593,306.1 592.5,306 592,308.2 591.5,306.2 591,306 590.5,307.2 590,306.4 589.5,307.1 589,305.3 588.5,307.2 588,306.1 587.5,307.1 587,304.9 586.5,306.7 586,306.1 585.5,307.1 585,306.5 584.5,305.1 584,306.8 583.5,306.8 583,307.1 582.5,305.7 582,307.1 581.5,306.4 581,306 580.5,306.7 580,306.7 579.5,307.6 579,306.5 578.5,307.5 578,307.5 577.5,306.7 577,307.3 576.5,306.8 576,307.3 575.5,306.8 575,306.1 574.5,306.3 574,307.5 573.5,305.2 573,306.9 572.5,306 572,306 571.5,305.9 571,307 570.5,307 570,306.6 569.5,305.9 569,305.6 568.5,305.8 568,306.3 567.5,306.1 567,305.6 566.5,306.9 566,305.1 565.5,306.7 565,306.2 564.5,306.4 564,306.3 563.5,305.7 563,305.4 562.5,305.6 562,307.1 561.5,306.3 561,307.2 560.5,307.7 560,305.9 559.5,307.4 559,306.6 558.5,306 558,306.2 557.5,306.3 557,306.7 556.5,306.8 556,305.9 555.5,305.7 555,306.9 554.5,306.4 554,306.4 553.5,306.3 553,306.3 552.5,307.2 552,305.1 551.5,306.4 551,306.6 550.5,306.5 550,305.6 549.5,307 549,306.8 548.5,307.6 548,306.7 547.5,308 547,306.7 546.5,307.1 546,306.5 545.5,306.2 545,306.2 544.5,306.3 544,308.1 543.5,306.2 543,306 542.5,305.9 542,306.7 541.5,306.2 541,307.4 540.5,306.5 540,306 539.5,307.2 539,306.8 538.5,305.9 538,306.6 537.5,306.1 537,306.8 536.5,307.8 536,306.7 535.5,306.1 535,306.9 534.5,306.7 534,306 533.5,306.8 533,306 532.5,306 532,305.8 531.5,305.9 531,306 530.5,305 530,307.4 529.5,306.8 529,306.4 528.5,306.3 528,307.4 527.5,306.2 527,306.1 526.5,307.5 526,306.4 525.5,305.7 525,307.1 524.5,305.8 524,306.7 523.5,306.6 523,306.3 522.5,305.4 522,306.3 521.5,306.4 521,306.5 520.5,305.2 520,306.5 519.5,306.7 519,306 518.5,306.9 518,307.1 517.5,306.3 517,307.1 516.5,308.1 516,306.6 515.5,307.1 515,307.5 514.5,306.9 514,306.3 513.5,307.2 513,305.7 512.5,305.4 512,306.6 511.5,306.1 511,306.5 510.5,307.1 510,307.1 509.5,306.3 509,305.8 508.5,306.6 508,308" fill="#e000e0"/>
<rect x="853" y="158" width="4" height="159" fill="#e000e0"/>
<rect x="854" y="153.5" width="2" height="6" fill="#e000e0"/>
<rect x="858" y="106" width="2" height="258" fill="#e000e0"/>
<polyline points="44,657 44.9,657 45.7,657 46.6,657 47.4,657 48.3,657 49.1,657 50,657 50.8,657 51.7,657 52.5,657 53.4,657 54.2,657 55.1,657 55.9,657 56.8,657 57.6,657 58.5,657 59.3,657 60.2,657 61,657 61.9,657 62.7,657 63.6,657 64.4,657 65.3,657 66.1,657 67,657 67.8,657 68.7,657 69.5,657 70.4,657 71.2,657 72.1,657 72.9,657 73.8,657 74.6,657 75.5,657 76.3,657 77.2,657 78,657 78.9,657 79.7,657 80.6,657 81.4,657 82.3,657 83.1,657 84,657 84.8,657 85.7,657 86.5,657 87.4,657 88.2,657 89.1,657 89.9,657 90.8,657 91.6,657 92.5,657 93.3,657 94.2,657 95,657 95.9,657 96.7,657 97.6,657 98.4,657 99.3,657 100.1,657 101,657 101.8,657 102.7,657 103.5,657 104.4,657 105.2,657 106.1,657 106.9,657 107.8,657 108.6,657 109.5,657 110.3,657 111.2,657 112,657 112.9,657 113.7,657 114.6,657 115.4,657 116.3,657 117.1,657 118,657 118.8,657 119.7,657 120.5,657 121.4,657 122.2,657 123.1,657 123.9,657 124.8,657 125.6,657 126.5,657 127.3,657 128.2,657 129,657 129.9,657 130.7,657 131.6,657 131.9,657 132.4,654.6 132.8,657 133.3,648.4 133.6,657 134.1,645 134.5,657 135,642.3 135.3,655.7 135.8,640.1 136.2,657 136.7,638.6 137,657 137.5,636.8 137.9,657 138.4,633.4 138.7,654 139.2,634.5 139.6,647 140.1,631.6 140.4,657 140.9,626.3 141.3,641.9 141.8,629.9 142.1,657 142.6,633.8 143,657 143.5,638.4 143.8,655.4 144.3,638.5 144.7,657 145.2,641.9 145.5,657 146,644.5 146.4,657 146.9,650.3 147.2,657 147.7,653.3 148.1,657 148.6,656.4 148.9,657 149.4,657 149.8,657 150.3,657 150.6,657 151.1,654.4 151.5,657 152,657 152.3,657 152.8,657 153.2,657 153.7,655.7 154,657 154.5,657 154.9,657 155.4,657 156.2,657 157.1,657 157.9,657 158.8,657 159.6,657 160,657 160.5,657 160.8,657 161.3,651.6 161.7,657 162.2,653.2 162.5,657 163,649.5 163.4,657 163.9,652.3 164.2,657 164.7,648.3 165.1,657 165.6,643.1 165.9,657 166.4,644.5 166.8,652.9 167.3,637.2 167.6,655.9 168.1,638.8 168.5,657 169,641.4 169.3,657 169.8,637 170.2,657 170.7,632.1 171,657 171.5,625.2 171.9,657 172.4,625.7 172.7,657 173.2,623.8 173.6,654.2 174.1,621 174.4,657 174.9,620 175.3,657 175.8,617.3 176.1,655.3 176.6,617.6 177,657 177.5,614.8 177.8,633.4 178.3,609.3 178.7,657 179.2,609.9 179.5,657 180,611.4 180.4,633 180.9,613.3 181.2,643.2 181.7,608.8 182.1,624.4 182.6,608.3 182.9,640.9 183.4,603.8 183.8,630.9 184.3,601.5 184.6,641.5 185.1,598.7 185.5,634.1 186,592.2 186.3,609.1 186.8,587.1 187.2,603 187.7,577.6 188,657 188.5,574.7 188.9,616.9 189.4,579.4 189.7,622.1 190.2,582.7 190.6,596.2 191.1,587.6 191.4,623.3 191.9,588.9 192.3,608 192.8,587 193.1,633.7 193.6,585.8 194,657 194.5,582.9 194.8,619.4 195.3,581.3 195.7,599.1 196.2,577.7 196.5,617.2 197,581.7 197.4,616 197.9,583.4 198.2,657 198.7,581.8 199.1,653.8 199.6,578.7 199.9,634 200.4,573.4 200.8,595.2 201.3,578.2 201.6,618.6 202.1,573.8 202.5,593.7 203,572.2 203.3,647.1 203.8,573.1 204.2,602.6 204.7,570.6 205,598.3 205.5,569.6 205.9,626.5 206.4,571.6 206.7,604.2 207.2,572.1 207.6,601.3 208.1,569.5 208.4,579.1 208.9,566 209.3,591.5 209.8,567.8 210.1,612.5 210.6,561.6 211,574.8 211.5,559.5 211.8,574.8 212.3,557 212.7,582.7 213.2,556.8 213.5,629.5 214,555.8 214.4,623.2 214.9,555.5 215.2,622.9 215.7,549.3 216.1,565.7 216.6,543 216.9,554.9 217.4,545.7 217.8,572.4 218.3,540.3 218.6,585.8 219.1,538.7 219.5,562.8 220,535 220.3,625.8 220.8,535.8 221.2,548.3 221.7,532.6 222,632.8 222.5,535 222.9,567.5 223.4,533.9 223.7,598 224.2,538.1 224.6,557.4 225.1,540.2 225.4,634.9 225.9,544.8 226.3,573.2 226.8,544.6 227.1,557.3 227.6,548.7 228,594.1 228.5,547.4 228.8,575.4 229.3,548.8 229.7,567 230.2,544.7 230.5,571.6 231,535.7 231.4,565.6 231.9,534.8 232.2,551.7 232.7,533.9 233.1,568.7 233.6,532.8 233.9,635.2 234.4,530.7 234.8,571.3 235.3,528.5 235.6,554.7 236.1,522.6 236.5,539.1 237,529 237.3,634.5 237.8,531.7 238.2,565 238.7,531.6 239,555 239.5,538.1 239.9,556.9 240.4,535.6 240.7,571.9 241.2,539.2 241.6,555.5 242.1,541.7 242.4,558.7 242.9,542.3 243.3,602.6 243.8,541.5 244.1,626.9 244.6,537.5 245,555.2 245.5,548.8 245.8,564 246.3,545.1 246.7,567.9 247.2,544 247.5,575.6 248,545.1 248.4,590.5 248.9,544.5 249.2,594.6 249.7,547.2 250.1,567.8 250.6,550.4 250.9,603.2 251.4,548.4 251.8,605.4 252.3,552.5 252.6,586.8 253.1,554.4 253.5,600.7 254,556.2 254.3,578 254.8,552 255.2,648.1 255.7,557.3 256,600.7 256.5,561.9 256.9,588 257.4,563.1 257.7,657 258.2,565.5 258.6,588.1 259.1,565.3 259.4,574.1 259.9,570.4 260.3,646 260.8,568.3 261.1,576.3 261.6,569.2 262,634.2 262.5,577.7 262.8,624.8 263.3,577.3 263.7,657 264.2,577.8 264.5,629.5 265,580.6 265.4,650 265.9,574.1 266.2,622.3 266.7,577.2 267.1,657 267.6,578.3 267.9,604.6 268.4,581.3 268.8,627.9 269.3,580.3 269.6,629 270.1,580.7 270.5,657 271,585 271.3,611.4 271.8,581.7 272.2,610.2 272.7,579.1 273,603.2 273.5,580.5 273.9,618.7 274.4,581.1 274.7,633.3 275.2,573.2 275.6,657 276.1,582.7 276.4,657 276.9,582.3 277.3,616.1 277.8,578.7 278.1,649.8 278.6,578.7 279,627.5 279.5,575.6 279.8,606.5 280.3,578.2 280.7,605.9 281.2,578.1 281.5,617.1 282,577.6 282.4,593.8 282.9,578.7 283.2,656.3 283.7,578.3 284.1,605.7 284.6,579.6 284.9,591.9 285.4,580.8 285.8,607.1 286.3,588.1 286.6,615.8 287.1,593 287.5,620.1 288,593.1 288.3,625.4 288.8,597 289.2,632.3 289.7,604.6 290,619.2 290.5,611.1 290.9,629.7 291.4,614.4 291.7,649.9 292.2,615.6 292.6,638.1 293.1,613.1 293.4,626.2 293.9,617.8 294.3,635.2 294.8,619.2 295.1,657 295.6,620.3 296,656.7 296.5,613.9 296.8,657 297.3,622.6 297.7,657 298.2,621.8 298.5,657 299,619.3 299.4,645.9 299.9,629.8 300.2,640.3 300.7,626.1 301.1,635.9 301.6,627.1 301.9,641.3 302.4,628.2 302.8,657 303.3,631.9 303.6,655.2 304.1,639.3 304.5,651.3 305,637.4 305.3,657 305.8,640.6 306.2,657 306.7,639.1 307,657 307.5,637.2 307.9,657 308.4,638.4 308.7,657 309.2,641.3 309.6,657 310.1,644.5 310.4,657 310.9,645.3 311.3,657 311.8,647.3 312.1,657 312.6,651.3 313,657 313.5,656.5 313.8,657 314.3,654.3 314.7,657 315.2,657 315.5,657 316,657 316.4,657 316.9,657 317.7,657 318.6,657 318.9,657 319.4,656.6 319.8,657 320.3,657 320.6,657 321.1,656.1 321.5,657 322,652.9 322.3,657 322.8,650.2 323.2,657 323.7,649.1 324,657 324.5,645 324.9,657 325.4,651.4 325.7,657 326.2,644.1 326.6,657 327.1,642.3 327.4,657 327.9,641.8 328.3,657 328.8,640.3 329.1,654.2 329.6,639.7 330,657 330.5,637.4 330.8,657 331.3,638.5 331.7,657 332.2,630.8 332.5,655.7 333,625 333.4,642.1 333.9,632.9 334.2,657 334.7,640.9 335.1,657 335.6,645.9 335.9,657 336.4,648 336.8,657 337.3,649.7 337.6,657 338.1,652.5 338.5,657 339,657 339.3,657 339.8,657 340.2,657 340.7,657 341.5,657 342.4,657 343.2,657 344.1,657 344.9,657 345.8,657 346.6,657 347.5,657 348.3,657 349.2,657 350,657 350.9,657 351.7,657 352.6,657 353.4,657 354.3,657 355.1,657 356,657 356.8,657 357.7,657 358.5,657 359.4,657 360.2,657 361.1,657 361.9,657 362.8,657 363.6,657 364.5,657 365.3,657 366.2,657 367,657 367.9,657 368.7,657 369.6,657 370.4,657 371.3,657 372.1,657 373,657 373.8,657 374.7,657 375.5,657 376.4,657 377.2,657 378.1,657 378.9,657 379.8,657 380.6,657 381.5,657 382.3,657 383.2,657 384,657 384.9,657 385.7,657 386.6,657 387.4,657 388.3,657 389.1,657 390,657 390.8,657 391.7,657 392.5,657 393.4,657 394.2,657 395.1,657 395.9,657 396.8,657 397.6,657 398.5,657 399.3,657 400.2,657 401,657 401.9,657 402.7,657 403.6,657 404.4,657 405.3,657 406.1,657 407,657 407.8,657 408.7,657 409.5,657 410.4,657 411.2,657 412.1,657 412.9,657 413.8,657 414.6,657 415.5,657 416.3,657 417.2,657 418,657 418.9,657 419.7,657 420.6,657 421.4,657 422.3,657 423.1,657 424,657 424.8,657 425.7,657 426.5,657 427.4,657 428.2,657 429.1,657" fill="none" stroke="#00dcdc" stroke-width="1"/>
<rect x="91.7" y="619" width="1" height="38" fill="#00dcdc"/>
<rect x="139.9" y="556" width="1" height="101" fill="#00dcdc"/>
<rect x="187.7" y="498" width="1" height="159" fill="#00dcdc"/>
<rect x="236.1" y="455" width="1" height="202" fill="#00dcdc"/>
<rect x="283.9" y="498" width="1" height="159" fill="#00dcdc"/>
<rect x="332.5" y="556" width="1" height="101" fill="#00dcdc"/>
<rect x="380.5" y="619" width="1" height="38" fill="#00dcdc"/>
<rect x="44" y="657" width="386" height="1" fill="#00dcdc"/>
<rect x="44" y="654" width="1" height="4" fill="#00dcdc"/>
<rect x="429" y="652" width="1" height="6" fill="#00dcdc"/>
<rect x="474.5" y="401.5" width="385" height="256" fill="#000" stroke="#4a4a4a" stroke-width="1"/>
<defs><linearGradient id="lg" x1="0" y1="0" x2="0" y2="1"><stop offset="0" stop-color="#f58a10"/><stop offset="0.45" stop-color="#e01818"/><stop offset="1" stop-color="#901010"/></linearGradient></defs>
<g transform="translate(860,615)">
<path d="M6.5,48.6 L30,17 C36,9 42,7 52,7 L69,7 L57,33 C56,37 60,38.5 66,37 C76,34 84,31 90,27 L82,48.6 L32,48.6 L36,40.5 L27,40.5 L23.5,48.6 Z" fill="url(#lg)"/>
<path d="M31,33 C34,26 40,20 50,18 C46,24 43,30 41.5,32.5 Z" fill="#121212"/>
<text x="33" y="48" font-family='"Liberation Sans", sans-serif' font-weight="bold" font-style="italic" font-size="11" fill="#f4f4f4" textLength="49" lengthAdjust="spacingAndGlyphs">CCEXP</text>
</g>
<path d="M955,626 h24.5 M962,622.2 v8.4 M972,622.2 v8.4 M957,630.3 h21 M976,633 C972,638 964,641.5 955.5,643 M958,633 C963,638 970,641.5 979,643 M996.3,622.2 v4 M984.3,626 h24.5 M987.3,629 h16 v6 h-16 z M991.8,635.5 C991.8,639.5 989.3,641.8 984.8,643 M1000.3,635.5 v6.5 h8.5 v-2 M1048.7,622 l2,2.6 M1061.3,622 l-2,2.6 M1043.7,625.3 h22.6 M1051.0,625.3 v6.5 M1058.3,625.3 v6.5 M1045.7,628 l2,3 M1064.3,628 l-2,3 M1042.7,631.8 h24.6 M1046.7,634.3 h16.6 v8.8 h-16.6 z M1046.7,638.6 h16.6" fill="none" stroke="#e0101c" stroke-width="3"/>
<path d="M1025.5,621.8 v2.5 M1014.2,627 v-1.8 h22.6 v1.8 M1015.2,628.8 h20.6 M1015.7,631.8 h19.6 M1014.2,634.9 h22.6 M1021.2,627 v8 M1029.8,627 v8 M1019.2,636.6 h12.6 v4.6 h-12.6 z M1022.2,641.2 L1014.7,643.3 M1028.8,641.2 L1036.2,643.3" fill="none" stroke="#e0101c" stroke-width="1.9"/>
<path d="M955,648.2 h9 v5 h-9 z M967,648.2 h9 v5 h-9 z M983,648.2 h9 v5 h-9 z M995,648.2 h9 v5 h-9 z M1011,648.2 h9 v5 h-9 z M1023,648.2 h9 v5 h-9 z M1039,648.2 h9 v5 h-9 z M1051,648.2 h9 v5 h-9 z M979.5,650.3 h1.2 v1.2 h-1.2 z M1007.5,650.3 h1.2 v1.2 h-1.2 z M1035.5,650.3 h1.2 v1.2 h-1.2 z" fill="none" stroke="#1f1f1f" stroke-width="1.2"/>
<text x="955" y="663.5" font-family='"Liberation Sans", sans-serif' font-style="italic" font-size="10" fill="#202020" textLength="112" lengthAdjust="spacing">www.hncsw.net</text>
</svg>
<div class="a" style="left:45px;top:93px;width:0;height:0;border-left:5px solid #dcdc00;border-top:4.1px solid transparent;border-bottom:4.1px solid transparent"></div>
<div class="a t11" style="left:57px;top:89.7px;line-height:13px;color:#dcdc00">Trc 1 :&nbsp; <span style="margin-left:1.2px">RF Envelope</span></div>
<div class="a t11" style="left:474.1px;top:89.7px;line-height:13px;color:#e000e0">Trc 2 :&nbsp; <span style="margin-left:1.2px">Demod Waveform</span></div>
<div class="a t11" style="left:44.1px;top:384.7px;line-height:13px;color:#00d0d0">Trc 3 :&nbsp; <span style="margin-left:1.2px">RF Spectrum</span></div>
<div class="a t11" style="left:474.1px;top:384.7px;line-height:13px;color:#00d000">Trc 4 :&nbsp; <span style="margin-left:1.2px">Result Sum</span></div>
<div class="a ax" style="left:4px;top:107px;line-height:10px">0.00</div>
<div class="a ax" style="left:4px;top:215.5px;line-height:10px">10.0<br>/div</div>
<div class="a ax" style="left:4px;top:353px;line-height:10px">-100</div>
<div class="a ax" style="left:434px;top:107px;line-height:10px">0.00</div>
<div class="a ax" style="left:434px;top:215.5px;line-height:10px">50.0 k<br>/div</div>
<div class="a ax" style="left:434px;top:353px;line-height:10px">-500 k</div>
<div class="a ax" style="left:4px;top:402px;line-height:10px">0.00</div>
<div class="a ax" style="left:4px;top:510.5px;line-height:10px">10.0<br>/div</div>
<div class="a ax" style="left:4px;top:648px;line-height:10px">-100</div>
<div class="a w" style="left:44px;top:365.8px;line-height:14px">Start 0 s</div>
<div class="a w" style="left:329px;width:100px;text-align:right;top:365.8px;line-height:14px">Stop 6 ms</div>
<div class="a w" style="left:474px;top:365.8px;line-height:14px">Start 0 s</div>
<div class="a w" style="left:709px;width:150px;text-align:right;top:365.8px;line-height:14px">Stop 1.624 ms</div>
<div class="a w" style="left:44px;top:660px;line-height:14px">Center 2.402 GHz</div>
<div class="a w" style="left:329px;width:100px;text-align:right;top:660px;line-height:14px">Span 4 MHz</div>
<div class="a tb" style="left:478.5px;top:410px;line-height:12px">Packet Type:</div>
<div class="a tb" style="left:573px;top:410px;line-height:12px">ACL_DH3</div>
<div class="a tb" style="left:668.5px;top:410px;line-height:12px">Payload:</div>
<div class="a tb" style="left:763px;top:410px;line-height:12px">0x55</div>
<div class="a tb" style="left:478.5px;top:429.5px;line-height:12px">Payload Length:</div>
<div class="a tb" style="left:573px;top:429.5px;line-height:12px">1456bits</div>
<div class="a tb" style="left:480px;top:450.5px;line-height:12px">Statistic</div>
<div class="a tb" style="left:606px;top:450.5px;line-height:12px">Current</div>
<div class="a tb" style="left:690px;top:450.5px;line-height:12px">MAX</div>
<div class="a tb" style="left:774px;top:450.5px;line-height:12px">MIN</div>
<div class="a tb" style="left:480px;top:467.9px;line-height:12px">Pavg (dBm)</div>
<div class="a tb" style="left:606px;top:467.9px;line-height:12px">-3.7879</div>
<div class="a tb" style="left:690px;top:467.9px;line-height:12px">-3.7799</div>
<div class="a tb" style="left:774px;top:467.9px;line-height:12px">-3.7936</div>
<div class="a tb" style="left:480px;top:485.2px;line-height:12px">Ppeak (dBm)</div>
<div class="a tb" style="left:606px;top:485.2px;line-height:12px">-3.6923</div>
<div class="a tb" style="left:690px;top:485.2px;line-height:12px">-3.6758</div>
<div class="a tb" style="left:774px;top:485.2px;line-height:12px">-3.7019</div>
<div class="a tb" style="left:480px;top:502.6px;line-height:12px">Δf1 Avg (Hz)</div>
<div class="a tb" style="left:480px;top:519.9px;line-height:12px">Δf2 Avg (Hz)</div>
<div class="a tb" style="left:606px;top:519.9px;line-height:12px">138.37 k</div>
<div class="a tb" style="left:690px;top:519.9px;line-height:12px">138.63 k</div>
<div class="a tb" style="left:774px;top:519.9px;line-height:12px">138.12 k</div>
<div class="a tb" style="left:480px;top:537.3px;line-height:12px">Δf1 Max (Hz)</div>
<div class="a tb" style="left:480px;top:554.7px;line-height:12px">Δf2 Max (Hz)</div>
<div class="a tb" style="left:606px;top:554.7px;line-height:12px">158.64 k</div>
<div class="a tb" style="left:690px;top:554.7px;line-height:12px">161.93 k</div>
<div class="a tb" style="left:774px;top:554.7px;line-height:12px">155.46 k</div>
<div class="a tb" style="left:480px;top:572.0px;line-height:12px">Δf2 &gt; 115KHz ()</div>
<div class="a tb" style="left:606px;top:572.0px;line-height:12px">100.00%</div>
<div class="a tb" style="left:690px;top:572.0px;line-height:12px">100.00%</div>
<div class="a tb" style="left:774px;top:572.0px;line-height:12px">100.00%</div>
<div class="a tb" style="left:480px;top:589.4px;line-height:12px">Δf2/Δf1 ()</div>
<div class="a tb" style="left:480px;top:606.7px;line-height:12px">Freq Drift (Hz)</div>
<div class="a tb" style="left:606px;top:606.7px;line-height:12px">-1.2542</div>
<div class="a tb" style="left:690px;top:606.7px;line-height:12px">3.3902</div>
<div class="a tb" style="left:774px;top:606.7px;line-height:12px">-6.2948</div>
<div class="a tb" style="left:480px;top:624.1px;line-height:12px">Max Drift Rate ()</div>
<div class="a tb" style="left:606px;top:624.1px;line-height:12px">442.89/50us</div>
<div class="a tb" style="left:690px;top:624.1px;line-height:12px">643.69/50us</div>
<div class="a tb" style="left:774px;top:624.1px;line-height:12px">368.35/50us</div>
<div class="a tb" style="left:480px;top:641.5px;line-height:12px">ICFT (Hz)</div>
<div class="a tb" style="left:606px;top:641.5px;line-height:12px">-211.86</div>
<div class="a tb" style="left:690px;top:641.5px;line-height:12px">471.17</div>
<div class="a tb" style="left:774px;top:641.5px;line-height:12px">-807.42</div>
</body></html>
